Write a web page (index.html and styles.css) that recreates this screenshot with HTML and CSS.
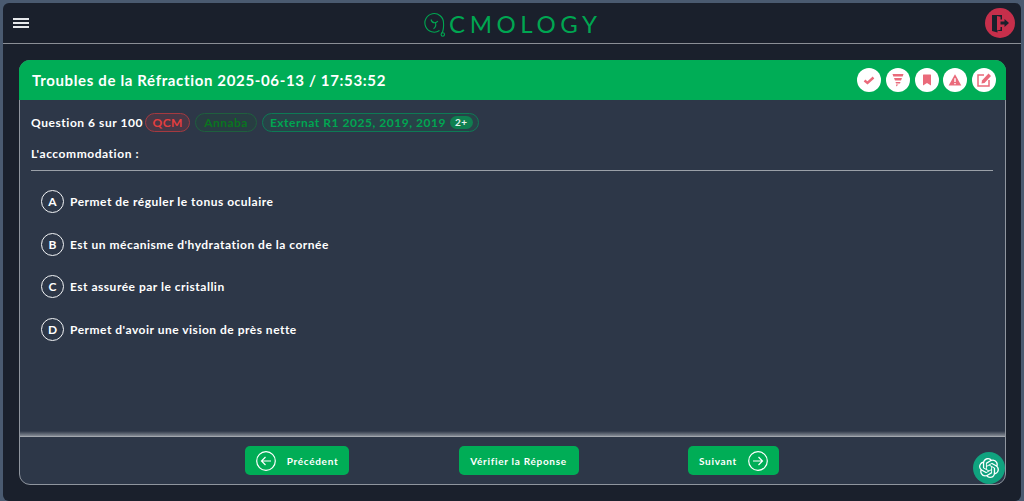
FILE: index.html
```html
<!DOCTYPE html>
<html>
<head>
  <meta charset="UTF-8">
  <title>Qcmology</title>
  <link rel="stylesheet" href="styles.css">
</head>
<body>
  <div class="frame">
    <header class="topbar">
      <button class="burger" aria-label="Menu"><span></span><span></span><span></span></button>
      <div class="logo">
        <svg class="logo-mark" width="23" height="25" viewBox="0 0 23 25" fill="none" stroke="#00a651" stroke-width="1.100">
          <path d="M15.500 18.500a9.300 9.300 0 1 1 4-7.500c.3 3.500-.2 6.500-.8 8.500-.3 1-.8 1.500-1.300 2"/>
          <circle cx="18.800" cy="22.500" r="1.700"/>
          <path d="M7 7.500c.5 2 1.800 3.200 3.500 3.200 1.600 0 2.800-.7 3.300-1.800M11.500 10.700c.6 2.500.3 4.800-2 6"/>
        </svg>
        <span class="logo-text">CMOLOGY</span>
      </div>
      <button class="logout" aria-label="Déconnexion">
        <svg width="19" height="19" viewBox="0 0 19 19" fill="#1a202c">
          <path d="M1 1h10v4.500H9.500V2.700L6 2v14.500l3.500-.8V13H11v4H6.500v1.500L1 17z"/>
          <path d="M9.500 7.500h4V5l4.500 4-4.500 4v-2.500h-4z"/>
        </svg>
      </button>
    </header>

    <main class="card">
      <div class="card-head">
        <h1>Troubles de la Réfraction 2025-06-13 / 17:53:52</h1>
        <div class="tools">
          <button class="tool"><svg width="14" height="14" viewBox="0 0 14 14" fill="none" stroke="#ea6a7a" stroke-width="2.400"><path d="M2.500 7.500l3 2.500 6-5.500"/></svg></button>
          <button class="tool"><svg width="14" height="14" viewBox="0 0 14 14" fill="#ea6a7a"><path d="M1.500 1h11l-.8 2.500H2.300zM3 5h8l-1 2.500H4zM4.500 9h5L9 10.500H5zM5 11.500h2.500L5.300 13.500z"/></svg></button>
          <button class="tool"><svg width="14" height="14" viewBox="0 0 14 14" fill="#ea6a7a"><path d="M3.500 1.500h7a.5.5 0 0 1 .5.500v10.500L7 10l-4 2.500V2a.5.5 0 0 1 .5-.5z"/></svg></button>
          <button class="tool"><svg width="14" height="14" viewBox="0 0 14 14"><path fill="#ea6a7a" d="M7 1.200l6.300 11.300H.7z"/><path fill="#fff" d="M6.300 5.300h1.400v3.800H6.300zM6.300 9.900h1.400v1.300H6.300z"/></svg></button>
          <button class="tool"><svg width="16" height="16" viewBox="0 0 16 16" fill="none" stroke="#ea6a7a" stroke-width="1.500"><path d="M8 3H2v11h11V8"/><path fill="#ea6a7a" stroke="none" d="M6 8.500L12.500 1.500 15 4l-6.500 7-3 .5z"/></svg></button>
        </div>
      </div>

      <div class="card-body">
        <div class="meta">
          <strong class="count">Question 6 sur 100</strong>
          <span class="tag tag-red">QCM</span>
          <span class="tag tag-dark">Annaba</span>
          <span class="tag tag-green">Externat R1 2025, 2019, 2019 <em class="more">2+</em></span>
        </div>
        <p class="question">L'accommodation :</p>
        <ul class="answers">
          <li><span class="letter">A</span>Permet de réguler le tonus oculaire</li>
          <li><span class="letter">B</span>Est un mécanisme d'hydratation de la cornée</li>
          <li><span class="letter">C</span>Est assurée par le cristallin</li>
          <li><span class="letter">D</span>Permet d'avoir une vision de près nette</li>
        </ul>
      </div>

      <footer class="card-foot">
        <button class="btn btn-prev">
          <svg width="20" height="20" viewBox="0 0 20 20" fill="none" stroke="#fff" stroke-width="1.200"><circle cx="10" cy="10" r="9.300"/><path d="M15 10H5.500M9.500 6l-4 4 4 4"/></svg>
          Précédent
        </button>
        <button class="btn btn-check">Vérifier la Réponse</button>
        <button class="btn btn-next">
          Suivant
          <svg width="20" height="20" viewBox="0 0 20 20" fill="none" stroke="#fff" stroke-width="1.200"><circle cx="10" cy="10" r="9.300"/><path d="M5 10h9.500M10.500 6l4 4-4 4"/></svg>
        </button>
      </footer>
      <button class="chat" aria-label="ChatGPT">
        <svg width="20" height="20" viewBox="0 0 24 24" fill="#fff">
          <path d="M22.2819 9.8211a5.9847 5.9847 0 0 0-.5157-4.9108 6.0462 6.0462 0 0 0-6.5098-2.9A6.0651 6.0651 0 0 0 4.9807 4.1818a5.9847 5.9847 0 0 0-3.9977 2.9 6.0462 6.0462 0 0 0 .7427 7.0966 5.98 5.98 0 0 0 .511 4.9107 6.051 6.051 0 0 0 6.5146 2.9001A5.9847 5.9847 0 0 0 13.2599 24a6.0557 6.0557 0 0 0 5.7718-4.2058 5.9894 5.9894 0 0 0 3.9977-2.9001 6.0557 6.0557 0 0 0-.7475-7.0729zm-9.022 12.6081a4.4755 4.4755 0 0 1-2.8764-1.0408l.1419-.0804 4.7783-2.7582a.7948.7948 0 0 0 .3927-.6813v-6.7369l2.02 1.1686a.071.071 0 0 1 .038.052v5.5826a4.504 4.504 0 0 1-4.4945 4.4944zm-9.6607-4.1254a4.4708 4.4708 0 0 1-.5346-3.0137l.142.0852 4.783 2.7582a.7712.7712 0 0 0 .7806 0l5.8428-3.3685v2.3324a.0804.0804 0 0 1-.0332.0615L9.74 19.9502a4.4992 4.4992 0 0 1-6.1408-1.6464zM2.3408 7.8956a4.485 4.485 0 0 1 2.3655-1.9728V11.6a.7664.7664 0 0 0 .3879.6765l5.8144 3.3543-2.0201 1.1685a.0757.0757 0 0 1-.071 0l-4.8303-2.7865A4.504 4.504 0 0 1 2.3408 7.872zm16.5963 3.8558L13.1038 8.364 15.1192 7.2a.0757.0757 0 0 1 .071 0l4.8303 2.7913a4.4944 4.4944 0 0 1-.6765 8.1042v-5.6772a.79.79 0 0 0-.407-.667zm2.0107-3.0231l-.142-.0852-4.7735-2.7818a.7759.7759 0 0 0-.7854 0L9.409 9.2297V6.8974a.0662.0662 0 0 1 .0284-.0615l4.8303-2.7866a4.4992 4.4992 0 0 1 6.6802 4.66zM8.3065 12.863l-2.02-1.1638a.0804.0804 0 0 1-.038-.0567V6.0742a4.4992 4.4992 0 0 1 7.3757-3.4537l-.142.0805L8.704 5.459a.7948.7948 0 0 0-.3927.6813zm1.0976-2.3654l2.602-1.4998 2.6069 1.4998v2.9994l-2.5974 1.4997-2.6067-1.4997Z"/>
        </svg>
      </button>
    </main>
  </div>
</body>
</html>
```

FILE: styles.css
```css
html, body {
  height: 100%;
}
body {
  margin: 0;
  background: #4a5a70;
  font-family: Lato, "Noto Sans", sans-serif;
  color: #fff;
  overflow: hidden;
}
button {
  font-family: inherit;
  border: none;
  padding: 0;
  cursor: pointer;
}
.frame {
  box-sizing: border-box;
  height: 498px;
  margin: 3px 3px 0 3px;
  background: #1a202c;
  border-radius: 6px;
  display: flex;
  flex-direction: column;
}
.topbar {
  height: 41px;
  flex: none;
  box-sizing: border-box;
  border-bottom: 1px solid #8b8f96;
  display: flex;
  align-items: center;
  justify-content: space-between;
  padding: 0 6px 0 10px;
  position: relative;
}
.burger {
  width: 16px;
  background: none;
  display: flex;
  flex-direction: column;
  gap: 2px;
}
.burger span {
  display: block;
  height: 2px;
  background: #e6e8eb;
}
.logo {
  display: flex;
  align-items: center;
  gap: 2px;
  position: absolute;
  left: 421px;
  top: 8px;
}
.logo-text {
  font-size: 24px;
  font-weight: 400;
  letter-spacing: 4.600px;
  color: #00a651;
  line-height: 26px;
}
.logout {
  width: 30px;
  height: 30px;
  border-radius: 50%;
  background: #c62f4b;
  display: flex;
  align-items: center;
  justify-content: center;
}
.card {
  flex: 1;
  box-sizing: border-box;
  margin: 16px 15px 16px 16px;
  border: 1px solid #8f959e;
  border-radius: 11px;
  background: #2d3748;
  display: flex;
  flex-direction: column;
  position: relative;
}
.card-head {
  height: 40px;
  flex: none;
  margin: -1px -1px 0 -1px;
  padding: 0 10px 0 13px;
  background: #00ad56;
  border-radius: 11px 11px 0 0;
  display: flex;
  align-items: center;
  justify-content: space-between;
}
.card-head h1 {
  margin: 0;
  font-size: 15px;
  font-weight: 700;
  letter-spacing: .65px;
}
.tools {
  display: flex;
  gap: 4.750px;
}
.tool {
  width: 24px;
  height: 24px;
  border-radius: 50%;
  background: #fff;
  display: flex;
  align-items: center;
  justify-content: center;
}
.card-body {
  flex: 1;
  padding: 13px 12px 0 11px;
}
.meta {
  display: flex;
  align-items: center;
  gap: 5px;
  font-size: 12px;
  letter-spacing: .55px;
}
.count {
  margin-right: -3px;
}
.tag {
  box-sizing: border-box;
  height: 19px;
  padding: 0 6.500px;
  border-radius: 10px;
  border: 1px solid;
  font-size: 12px;
  font-weight: 700;
  letter-spacing: .45px;
  display: flex;
  align-items: center;
  gap: 4px;
}
.tag-red {
  color: #e53e3e;
  border-color: #a43a40;
  background: rgba(229, 62, 62, .15);
}
.tag-dark {
  color: #0a751f;
  border-color: #1f5f3e;
  background: rgba(6, 107, 28, .12);
  padding: 0 8px;
}
.tag-green {
  color: #00a651;
  border-color: #0e7a55;
  background: rgba(0, 166, 81, .1);
  padding: 0 7px;
  letter-spacing: .53px;
}
.more {
  font-style: normal;
  font-weight: 700;
  font-size: 10px;
  background: #0f7f50;
  color: #e8f3ee;
  border-radius: 7px;
  padding: 0 5px;
  line-height: 13px;
  margin-right: -2px;
}
.question {
  margin: 14px 0 0 0;
  font-size: 12px;
  font-weight: 700;
  letter-spacing: .55px;
  line-height: 16px;
  padding-bottom: 8px;
  border-bottom: 1px solid #9aa0a8;
}
.answers {
  list-style: none;
  margin: 0;
  padding: 0;
}
.answers li {
  height: 42.700px;
  margin-left: 10px;
  display: flex;
  align-items: center;
  gap: 6px;
  font-size: 12px;
  font-weight: 700;
  letter-spacing: .5px;
}
.letter {
  box-sizing: border-box;
  width: 23px;
  height: 23px;
  border: 1px solid #f2f4f6;
  border-radius: 50%;
  display: flex;
  align-items: center;
  justify-content: center;
  font-size: 12px;
  letter-spacing: 0;
}
.answers li:first-child {
  margin-top: 9px;
}
.card-foot {
  height: 48px;
  flex: none;
  box-sizing: border-box;
  border-top: 1px solid #a2a7ae;
  position: relative;
  display: flex;
  align-items: center;
  justify-content: space-between;
  padding: 0 226px 0 225px;
}
.card-foot::before {
  content: "";
  position: absolute;
  left: 0;
  right: 0;
  top: -6px;
  height: 5px;
  background: linear-gradient(#2d3748, #858b95);
}
.btn {
  height: 29px;
  border-radius: 5px;
  background: #00ad56;
  color: #fff;
  font-size: 10px;
  font-weight: 700;
  letter-spacing: .7px;
  display: flex;
  align-items: center;
  justify-content: center;
}
.btn-prev {
  width: 104px;
  gap: 11px;
}
.btn-check {
  width: 120px;
}
.btn-next {
  width: 91px;
  gap: 11px;
}
.chat {
  position: absolute;
  right: 0;
  bottom: 0;
  width: 32px;
  height: 32px;
  border-radius: 50%;
  background: #10a37f;
  display: flex;
  align-items: center;
  justify-content: center;
}
```
